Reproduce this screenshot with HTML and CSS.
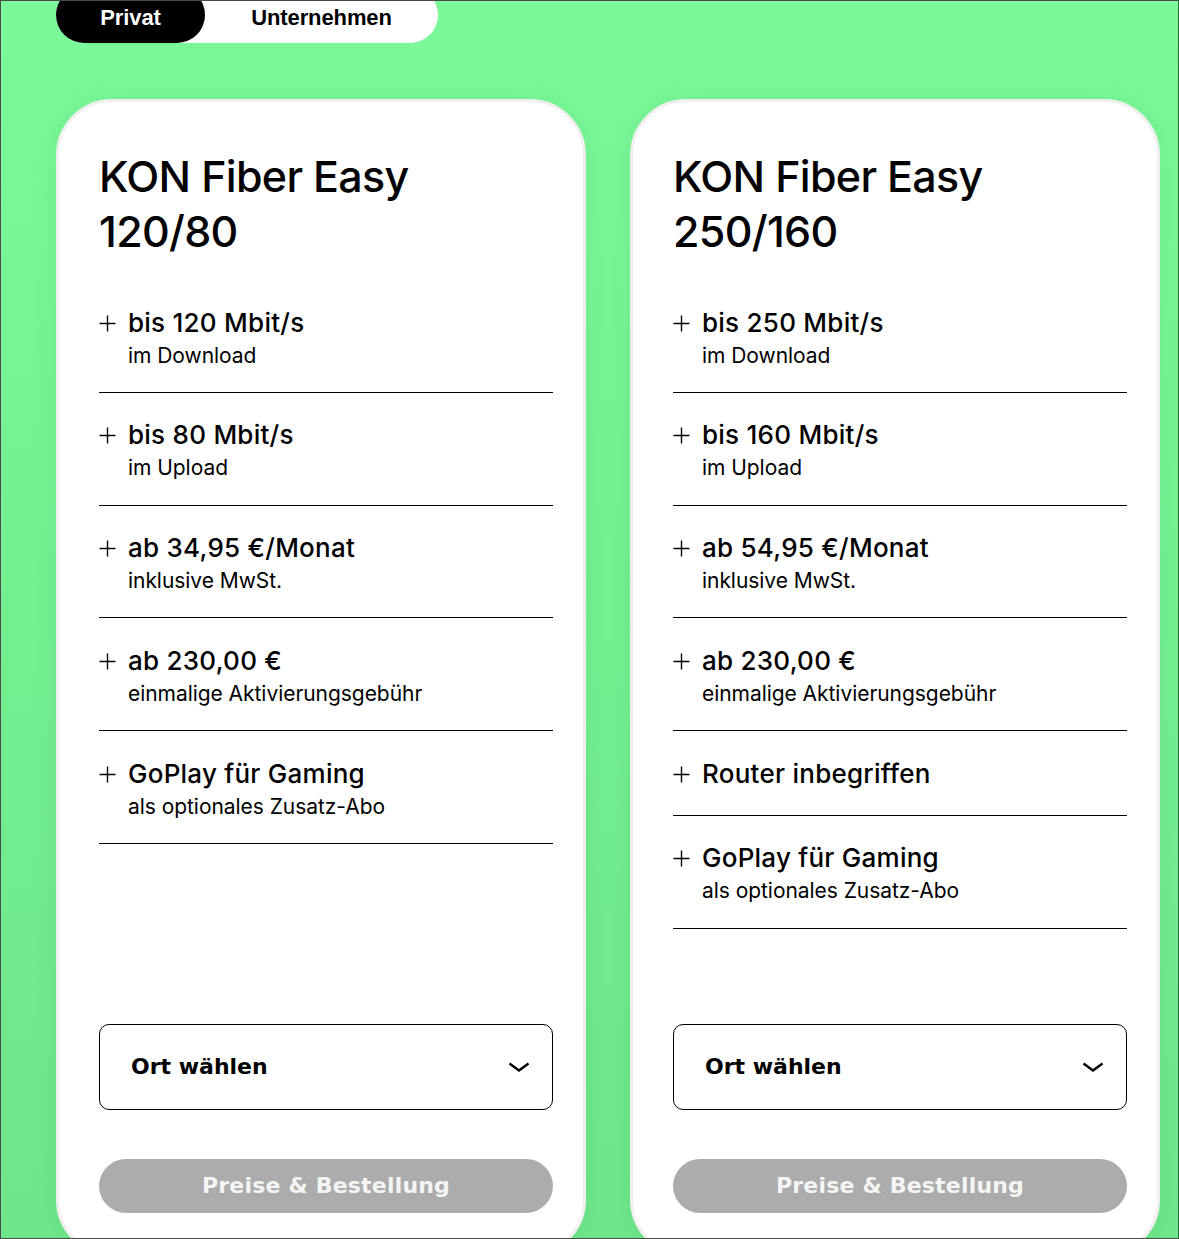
FILE: index.html
```html
<!DOCTYPE html>
<html lang="de">
<head>
<meta charset="utf-8">
<title>KON Fiber Easy</title>
<link rel="stylesheet" href="styles.css">
</head>
<body>
<div class="frame">
  <nav class="tabs">
    <span class="tab tab-active">Privat</span>
    <span class="tab tab-other">Unternehmen</span>
  </nav>
  <main class="cards">
    <section class="card">
      <h2 class="card-title">KON Fiber Easy<br>120/80</h2>
      <ul class="features">
        <li class="feature"><svg class="plus" viewBox="0 0 16 16"><path d="M8 0.5V15.5M0.5 8H15.5"/></svg><div><div class="f-title">bis 120 Mbit/s</div><div class="f-sub">im Download</div></div></li>
        <li class="feature"><svg class="plus" viewBox="0 0 16 16"><path d="M8 0.5V15.5M0.5 8H15.5"/></svg><div><div class="f-title">bis 80 Mbit/s</div><div class="f-sub">im Upload</div></div></li>
        <li class="feature"><svg class="plus" viewBox="0 0 16 16"><path d="M8 0.5V15.5M0.5 8H15.5"/></svg><div><div class="f-title">ab 34,95 €/Monat</div><div class="f-sub">inklusive MwSt.</div></div></li>
        <li class="feature"><svg class="plus" viewBox="0 0 16 16"><path d="M8 0.5V15.5M0.5 8H15.5"/></svg><div><div class="f-title">ab 230,00 €</div><div class="f-sub">einmalige Aktivierungsgebühr</div></div></li>
        <li class="feature"><svg class="plus" viewBox="0 0 16 16"><path d="M8 0.5V15.5M0.5 8H15.5"/></svg><div><div class="f-title">GoPlay für Gaming</div><div class="f-sub">als optionales Zusatz-Abo</div></div></li>
      </ul>
      <div class="card-foot">
        <div class="select"><span>Ort wählen</span><svg class="chev" viewBox="0 0 22 10"><path d="M1.5 1.5L11 8.5L20.5 1.5"/></svg></div>
        <div class="btn">Preise &amp; Bestellung</div>
      </div>
    </section>
    <section class="card">
      <h2 class="card-title">KON Fiber Easy<br>250/160</h2>
      <ul class="features">
        <li class="feature"><svg class="plus" viewBox="0 0 16 16"><path d="M8 0.5V15.5M0.5 8H15.5"/></svg><div><div class="f-title">bis 250 Mbit/s</div><div class="f-sub">im Download</div></div></li>
        <li class="feature"><svg class="plus" viewBox="0 0 16 16"><path d="M8 0.5V15.5M0.5 8H15.5"/></svg><div><div class="f-title">bis 160 Mbit/s</div><div class="f-sub">im Upload</div></div></li>
        <li class="feature"><svg class="plus" viewBox="0 0 16 16"><path d="M8 0.5V15.5M0.5 8H15.5"/></svg><div><div class="f-title">ab 54,95 €/Monat</div><div class="f-sub">inklusive MwSt.</div></div></li>
        <li class="feature"><svg class="plus" viewBox="0 0 16 16"><path d="M8 0.5V15.5M0.5 8H15.5"/></svg><div><div class="f-title">ab 230,00 €</div><div class="f-sub">einmalige Aktivierungsgebühr</div></div></li>
        <li class="feature"><svg class="plus" viewBox="0 0 16 16"><path d="M8 0.5V15.5M0.5 8H15.5"/></svg><div><div class="f-title">Router inbegriffen</div></div></li>
        <li class="feature"><svg class="plus" viewBox="0 0 16 16"><path d="M8 0.5V15.5M0.5 8H15.5"/></svg><div><div class="f-title">GoPlay für Gaming</div><div class="f-sub">als optionales Zusatz-Abo</div></div></li>
      </ul>
      <div class="card-foot">
        <div class="select"><span>Ort wählen</span><svg class="chev" viewBox="0 0 22 10"><path d="M1.5 1.5L11 8.5L20.5 1.5"/></svg></div>
        <div class="btn">Preise &amp; Bestellung</div>
      </div>
    </section>
  </main>
</div>
</body>
</html>
```
FILE: styles.css
```css
* { box-sizing: border-box; }
html, body { margin: 0; padding: 0; }
body {
  width: 1179px;
  height: 1239px;
  overflow: hidden;
  font-family: Inter, "Liberation Sans", sans-serif;
  color: #000;
}
.frame {
  width: 100%;
  height: 100%;
  overflow: hidden;
  border: 1px solid #4a4a4a;
  border-right-color: #2e6b3d;
  background: linear-gradient(180deg, #7bf998 0%, #74f091 45%, #6de68a 100%);
  padding-left: 55px;
}
.tabs {
  display: flex;
  width: 382px;
  height: 56px;
  margin-top: -14px;
  background: #fff;
  border-radius: 28px;
  font-family: "Liberation Sans", Arial, sans-serif;
  font-weight: 700;
  font-size: 22px;
  letter-spacing: -0.1px;
}
.tab {
  display: block;
  height: 56px;
  padding-top: 5px;
  line-height: 52px;
  text-align: center;
  border-radius: 28px;
}
.tab-active { width: 149px; background: #000; color: #fff; }
.tab-other { flex: 1; color: #000; }

.cards {
  display: grid;
  grid-template-columns: 530px 530px;
  gap: 44px;
  margin-top: 56px;
  align-items: stretch;
}
.card {
  display: flex;
  flex-direction: column;
  background: #fff;
  border: 3px solid #efefef;
  border-radius: 56px;
  padding: 47px 30px 40px 40px;
  box-shadow: 0 0 24px rgba(0, 90, 30, 0.07);
}
.card-title {
  margin: 0 0 21px;
  font-weight: 500;
  font-size: 43px;
  line-height: 55px;
  letter-spacing: -0.7px;
}
.features { list-style: none; margin: 0; padding: 0; }
.feature {
  display: flex;
  align-items: flex-start;
  padding: 23.5px 0 22.25px;
  border-bottom: 1px solid #000;
}
.plus {
  flex: none;
  width: 17px;
  height: 17px;
  margin: 11px 12px 0 0;
  fill: none;
  stroke: #000;
  stroke-width: 1.3;
}
.f-title {
  font-weight: 550;
  font-size: 26px;
  line-height: 38px;
  letter-spacing: 0.25px;
}
.f-sub {
  font-weight: 400;
  font-size: 21px;
  line-height: 28px;
  letter-spacing: -0.05px;
}
.card-foot {
  margin-top: auto;
  padding-top: 95px;
}
.select {
  display: flex;
  align-items: center;
  justify-content: space-between;
  height: 86px;
  border: 1px solid #000;
  border-radius: 10px;
  padding: 0 22px 0 31px;
  font-family: "DejaVu Sans", sans-serif;
  font-weight: 700;
  font-size: 22px;
}
.chev {
  width: 22px;
  height: 10px;
  fill: none;
  stroke: #000;
  stroke-width: 2.4;
}
.btn {
  margin-top: 49px;
  height: 54px;
  border-radius: 27px;
  background: #abacab;
  color: #f5f5f5;
  text-align: center;
  line-height: 54px;
  font-family: "DejaVu Sans", sans-serif;
  font-weight: 700;
  font-size: 22px;
  letter-spacing: 0.2px;
}
```
